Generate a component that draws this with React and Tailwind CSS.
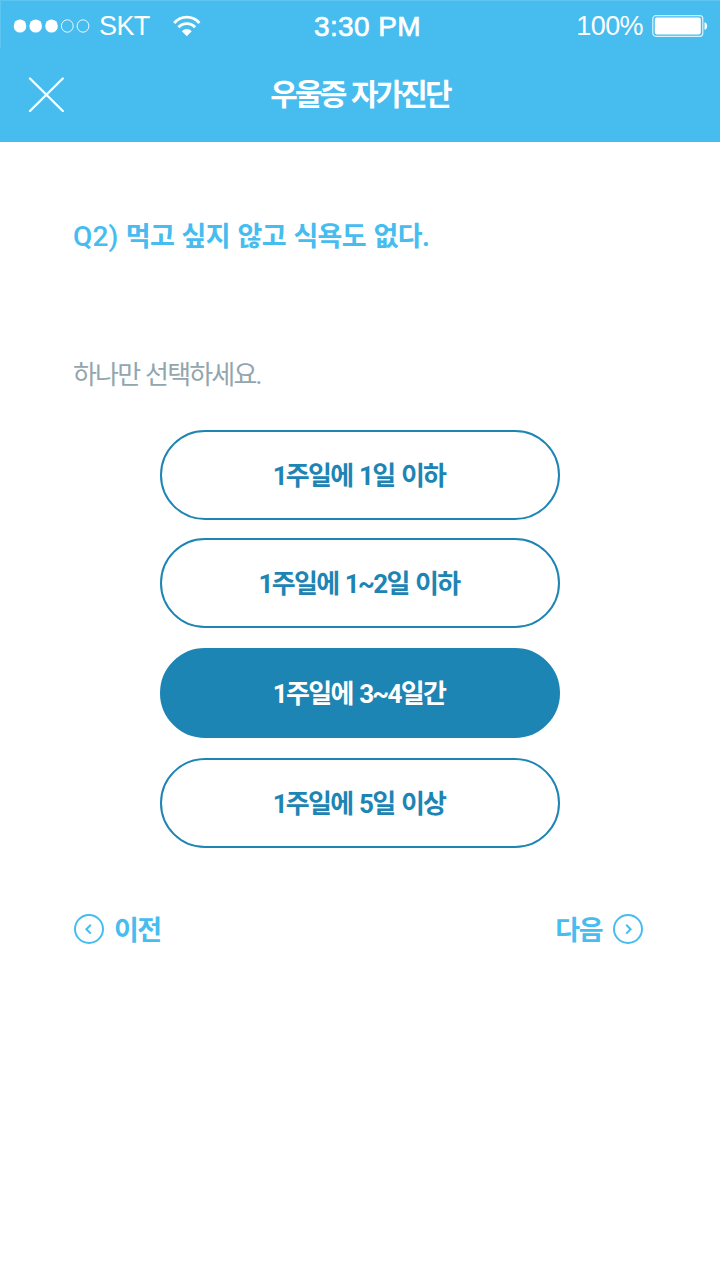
const options = [
  { label: '1주일에 1일 이하', gap: '' },
  { label: '1주일에 1~2일 이하', gap: 'mt-[18px]' },
  { label: '1주일에 3~4일간', gap: 'mt-5', selected: true },
  { label: '1주일에 5일 이상', gap: 'mt-5' },
];

function Signal() {
  return (
    <svg className="ml-[12px] h-[14px] w-[78px] shrink-0" viewBox="0 0 78 14">
      <g fill="#fff">
        <ellipse cx="7" cy="7" rx="6.3" ry="6.6" />
        <ellipse cx="22.7" cy="7" rx="6.3" ry="6.6" />
        <ellipse cx="38.5" cy="7" rx="6.3" ry="6.6" />
      </g>
      <g fill="none" stroke="#fff" strokeWidth="1" strokeOpacity=".9">
        <ellipse cx="54.3" cy="7" rx="5.900" ry="6.2" />
        <ellipse cx="70" cy="7" rx="5.900" ry="6.2" />
      </g>
    </svg>
  );
}

function Wifi() {
  return (
    <svg className="ml-[23px] h-[22px] w-[28px] shrink-0" viewBox="0 0 28 22">
      <g fill="none" stroke="#fff" strokeWidth="2.9">
        <path d="M1.2 7.9C8.2 .2 19.4 .2 26.400 7.9" />
        <path d="M5.500 12.300C10 7.400 17.600 7.400 22.100 12.300" />
      </g>
      <path d="M8.900 16.200C11.600 13.200 16 13.200 18.700 16.200L13.800 21.200z" fill="#fff" />
    </svg>
  );
}

function Battery() {
  return (
    <svg className="ml-[9px] h-[22px] w-[56px] shrink-0" viewBox="0 0 56 22">
      <rect x=".8" y=".7" width="50" height="20.6" rx="3" fill="none" stroke="#fff" strokeOpacity=".8" strokeWidth="1.2" />
      <rect x="2.8" y="2.6" width="46" height="16.8" rx="1.8" fill="#fff" />
      <path d="M52.5 7.2C54.2 7.4 55.2 9 55.2 11s-1 3.600-2.700 3.800z" fill="#fff" />
    </svg>
  );
}

function Chevron({ next }) {
  return (
    <svg className="size-[30px] shrink-0" viewBox="0 0 30 30" fill="none" stroke="#46bcef" strokeWidth="2">
      <circle cx="15" cy="15" r="14" />
      <path d={next ? 'M13.200 10.800L17.600 15.200L13.200 19.600' : 'M16.800 10.800L12.400 15.200L16.800 19.600'} />
    </svg>
  );
}

export default function App() {
  return (
    <div className="flex h-[1280px] w-[720px] flex-col overflow-hidden bg-white font-['Roboto','Noto_Sans_CJK_KR',sans-serif]">
      <header className="h-[142px] bg-[#46bcef] text-white">
        <div className="grid h-12 grid-cols-3 border-t border-l border-[#5dc5f1] font-['Liberation_Sans',sans-serif] text-[27px] leading-none">
          <div className="flex h-[50px] items-center">
            <Signal />
            <span className="ml-[8px] pt-px tracking-[-0.6px]">SKT</span>
            <Wifi />
          </div>
          <div className="flex h-[50px] items-center justify-center pt-px pl-[14px] text-[28px] tracking-[0.4px] [-webkit-text-stroke:0.7px_white]">3:30 PM</div>
          <div className="flex h-[50px] items-center justify-end pr-[12px]">
            <span className="pt-px tracking-[-0.6px]">100%</span>
            <Battery />
          </div>
        </div>
        <div className="grid h-[94px] grid-cols-[120px_1fr_120px] items-center">
          <button aria-label="닫기" className="ml-7 size-9">
            <svg className="size-9" viewBox="0 0 36 36" stroke="#fff" strokeWidth="2.3" strokeLinecap="round">
              <path d="M2 1.500L34.800 34M34.800 1.500L2 34" />
            </svg>
          </button>
          <h1 className="text-center text-[30px] leading-[40px] font-bold tracking-[-2.9px] whitespace-nowrap [word-spacing:2px]">우울증 자가진단</h1>
        </div>
      </header>
      <main className="flex flex-col px-[73px]">
        <h2 className="mt-[75px] h-10 text-[27px] leading-10 font-bold tracking-[-0.6px] whitespace-nowrap text-[#46bcef] [word-spacing:1.3px]"><span className="text-[28px] font-medium tracking-[0.1px]">Q2)</span> 먹고 싶지 않고 식욕도 없다.</h2>
        <p className="mt-[98px] h-10 text-[26px] leading-10 tracking-[-1.8px] whitespace-nowrap text-[#93a5ad] [word-spacing:1px]">하나만 선택하세요.</p>
        <div className="mt-[35px] flex flex-col items-center">
          {options.map(({ label, gap, selected }) => (
            <button
              key={label}
              className={`flex h-[90px] w-[400px] items-center justify-center rounded-full border-2 border-[#1d85b4] pt-[2px] pr-[2px] text-[26px] leading-10 font-bold tracking-[-1.7px] whitespace-nowrap [word-spacing:1.7px] ${gap} ${selected ? 'bg-[#1d85b4] text-white' : 'text-[#1d85b4]'}`}
            >
              {label}
            </button>
          ))}
        </div>
        <nav className="mt-[61px] flex h-10 items-center justify-between pr-[4px] pl-[1px] text-[27px] leading-10 font-bold tracking-[-1.5px] text-[#46bcef]">
          <button className="flex items-center gap-[10px]"><Chevron /><span className="pt-[3px]">이전</span></button>
          <button className="flex items-center gap-[11px]"><span className="pt-[3px]">다음</span><Chevron next /></button>
        </nav>
      </main>
    </div>
  );
}
